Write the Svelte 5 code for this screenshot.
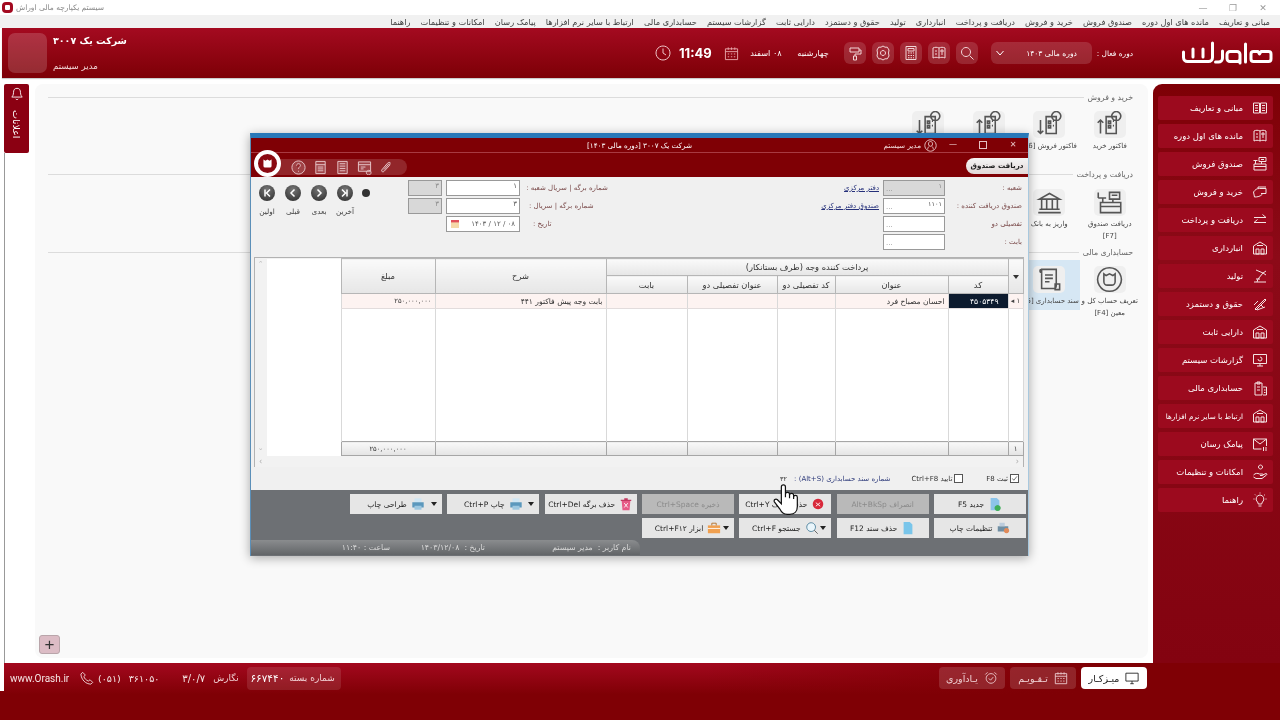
<script>
  const P = {
    book: "M1.5 3h6v10h-6zM8.5 3h6v10h-6zM3 5.5h3M3 8h3M3 10.5h3M10 5.5h3M10 8h3M10 10.5h3",
    book2: "M2 3c2-1 4-1 6 0c2-1 4-1 6 0v10c-2-1-4-1-6 0c-2-1-4-1-6 0zM8 3v10M4 6h2M4 9h2M10 5h2v2h-2zM10 9h2",
    register: "M7 1.5h7v4h-7zM2 8h12v6H2zM3.5 8V4.5M2 10.5h12M1.5 4.5h4M9.5 8V5.5M9 3.5h3",
    hand: "M1.5 8c2-2.5 3-3.5 6-3.5h6.5v5h-5M1.5 8l1 5c3 0 6-.5 8-3M6 4.5V3h8",
    arrows: "M2 5.5h12M10.5 2.5l3.5 3M14 10.5H2M5.5 7.5l-3.5 3",
    store: "M1.5 14V6l6.5-4 6.5 4v8zM4 9h3v5H4zM9 9h3v5H9zM5 5.5h6",
    robot: "M2 14h12M5 14l1-3 5-6M4 2l7 3 3-2M11 5l3 2M4 11h4",
    pen: "M3 13l3-3 7-7 1 1-7 7-3 3zM9 9l3 3M2 9l4-4M5 14l8-3",
    monitor: "M1.5 2.5h13v9h-13zM5 14h6M8 11.5V14M6 7a2 2 0 1 0 2-2",
    clip: "M3 3h7v12H3zM5 2h3v2H5zM5 7h3M5 10h3M11 7h3.5v8H11M12 10h1.5M12 12.5h1.5",
    mail: "M1.5 3h13v7M1.5 3v10h8M1.5 3l6.5 5 6.5-5M11.5 11v4M14 11v4",
    care: "M8.5 1a2 2 0 1 0 .01 0M1.5 11c2-2 4-2 6-1h3c1 0 1 1.5 0 1.5H8M10.5 11l3.5-1.5c1 0 1 1 .5 1.5L10 14.5H4L1.5 13",
    bulb: "M8 3a4 4 0 0 0-2.5 7c.7.7.7 1.5.7 2h3.6c0-.5 0-1.3.7-2A4 4 0 0 0 8 3zM6.5 14h3M8 .5v1M1.5 7h1M13.5 7h1M3 2.5l.8.8M13 2.5l-.8.8",
    roller: "M3 3h9v4H3zM12 5h2v4H8v2M6.5 11h3v4h-3z",
    gear: "M8 1l2 1.200h2.300L14 5l-.5 3 .5 3-1.700 2.800H10L8 15l-2-1.200H3.700L2 11l.5-3L2 5l1.700-2.800H6zM8 5.500a2.500 2.500 0 1 0 .01 0",
    calc: "M3 1.500h10v13H3zM5 3.500h6V6H5zM5 8h1.500M7.500 8H9M10 8h1M5 10.500h1.500M7.500 10.500H9M10 10.500h1M5 12.800h1.500M7.500 12.800H9M10 12.800h1",
    search: "M7 2.500a4.500 4.500 0 1 0 .01 0M10.500 10.500l4 4",
    clock: "M8 1a7 7 0 1 0 .01 0M8 3.500V8l3 2",
    cal: "M1.500 3h13v11.500h-13zM1.500 6h13M4.500 1.500V4M8 1.500V4M11.500 1.500V4M4 8.500h1.500M7.300 8.500h1.500M10.500 8.500H12M4 11.500h1.500M7.300 11.500h1.500M10.500 11.500H12",
    phone: "M3 1.500l3 3-1.500 2c.5 2 2.500 4 5 5l2-1.500 3 3-2 2c-6 0-11-5-11.500-11.500z",
    pc: "M1 2.500h14v9H1zM6 14.500h4M8 11.500v3",
    alarm: "M8 3a5.500 5.500 0 1 0 .01 0M5.500 8.500l2 2 3-3.500M1.500 4L4 1.500M14.500 4L12 1.500",
    user: "M8 1a7 7 0 1 0 .01 0M8 3a2.500 3 0 1 0 .01 0M4.500 13c0-2 1-3.500 2-4M11.500 13c0-2-1-3.500-2-4",
    help: "M8 1a7 7 0 1 0 .01 0M6 6c0-3 4.500-2.500 4 0c-.3 1.500-2 1.500-2 3.500M8 11.500v1",
    form: "M3 1.500h10v13H3zM3 5h10M5 7.500h6M5 9.500h6M5 11.500h6",
    list: "M3 1.500h10v13H3zM5 4h6M5 6.500h6M5 9h6M5 11.500h6",
    win: "M1.500 2h13v10h-13zM1.500 5h13M4 7.500h5M4 9.500h3M12.500 11a2.500 2.500 0 1 0 .01 0",
    att: "M12.500 3.500c-1-1.500-2.500-1-3.500 0l-6 7c-1 1.500 1 3 2.500 1.500l6-6.500c.5-1-.5-1.500-1.200-1L5.500 10"
  };
  const T = {
    up: "M9 5h9v15H9zM11 9h2v2h-2zM15 9h1M11 13h2v2h-2zM15 13h1M4 20V8M1.500 10.500L4 8l2.500 2.500M18 .5a4 4 0 1 0 .01 0",
    down: "M9 5h9v15H9zM11 9h2v2h-2zM15 9h1M11 13h2v2h-2zM15 13h1M4 8v12M1.500 17.500L4 20l2.500-2.500M18 .5a4 4 0 1 0 .01 0",
    reg: "M12 3h9v6h-9zM4 12h18v9H4zM6 12V8M4 15.500h18M2 8h7M15 12V9M14 5.500h5M2 3v5",
    bank: "M3 9l9-5 9 5zM5 9v9M9.500 9v9M14.500 9v9M19 9v9M3 18h18M2 21h20",
    seal: "M12 1.500a10.500 10.500 0 1 0 .01 0M7 7l2 1.500 3-1.500 3 1.500L17 7v7a3 3 0 0 1-3 3h-4a3 3 0 0 1-3-3z",
    ledger: "M5 3h13v14c0 2-1 3-2 3H5zM5 3c-2 0-2 3 0 3M8 8h7M8 11h7M8 14h4M17 16h4v5h-4z"
  };
  const menu = ["مبانی و تعاریف","مانده های اول دوره","صندوق فروش","خرید و فروش","دریافت و پرداخت","انبارداری","تولید","حقوق و دستمزد","دارایی ثابت","گزارشات سیستم","حسابداری مالی","ارتباط با سایر نرم افزارها","پیامک رسان","امکانات و تنظیمات","راهنما"];
  const side = ["book","book2","register","hand","arrows","store","robot","pen","store","monitor","clip","store","mail","care","bulb"];
  const sections = [
    { h: "خرید و فروش", items: [
      { i: "up", l: ["فاکتور خرید"] }, { i: "down", l: ["فاکتور فروش [F6]"] }, { i: "up", l: [] }, { i: "down", l: [] } ] },
    { h: "دریافت و پرداخت", items: [
      { i: "reg", l: ["دریافت صندوق", "[F7]"] }, { i: "bank", l: ["واریز به بانک"] } ] },
    { h: "حسابداری مالی", items: [
      { i: "seal", l: ["تعریف حساب کل و", "معین [F4]"] }, { i: "ledger", l: ["سند حسابداری [F5]"], on: true } ] }
  ];
  const heads = ["بابت","عنوان تفصیلی دو","کد تفصیلی دو","عنوان","کد"];
  const nav = [
    { t: "اولین", d: "M6 4.500v7M11 4.500L7.500 8l3.500 3.500" },
    { t: "قبلی", d: "M9.500 4.500L6 8l3.500 3.500" },
    { t: "بعدی", d: "M6.500 4.500L10 8l-3.500 3.500" },
    { t: "آخرین", d: "M10 4.500v7M5 4.500L8.500 8 5 11.500" }
  ];
  const tools = ["help","form","list","win","att"];
  const btns = [
    { t: "جدید F5", i: "new" },
    { t: "انصراف Alt+BkSp", off: true },
    { t: "حذف ردیف Ctrl+Y", i: "x" },
    { t: "ذخیره Ctrl+Space", off: true },
    { t: "حذف برگه Ctrl+Del", i: "trash" },
    { t: "چاپ Ctrl+P", i: "print", caret: true },
    { t: "طراحی چاپ", i: "print", caret: true },
    { t: "تنظیمات چاپ", i: "setup" },
    { t: "حذف سند F12", i: "doc" },
    { t: "جستجو Ctrl+F", i: "find", caret: true },
    { t: "ابزار Ctrl+F۱۲", i: "box", caret: true }
  ];
  const B = {
    new: [["M3 1h7l3 3v11H3z","#8cc4ea"],["M11 9a3.500 3.500 0 1 0 .01 0","#3fae5a"]],
    x: [["M8 2a6 6 0 1 0 .01 0","#d8283a"],["M5.500 6.500l5 4M10.500 6.500l-5 4","none","#fff"]],
    trash: [["M3 4h10l-1 11H4z","#e65a86"],["M2 3h12v1.500H2zM6 1.500h4V3H6z","#c23a62"],["M6 7l4 5M10 7l-4 5","none","#fff"]],
    print: [["M4 1.500h8V6H4z","#cfe6f4"],["M1.500 6h13v6h-13z","#5b98bd"],["M4 10h8v4.500H4z","#9cc7e0"]],
    setup: [["M2 6h12v6H2z","#6f8ea3"],["M4 2h6v4H4z","#bcd"],["M12 8a3 3 0 1 0 .01 0","#e08a5a"]],
    doc: [["M3 1h7l3 3v11H3z","#79c5ea"]],
    find: [["M7 2a5 5 0 1 0 .01 0","#e9f5fb","#4a7f9a"],["M10.500 10.500l4 4","none","#555"]],
    box: [["M1 5h14v9H1z","#f0a050"],["M5.500 5V2.500h5V5","none","#b26a20"],["M1 8.500h14","none","#fff"]]
  };
</script>

{#snippet ico(d, cls = "ic")}
  <svg class={cls} viewBox="0 0 16 16" aria-hidden="true"><path {d} /></svg>
{/snippet}

<div class="app">
  <div class="titlebar">
    <span class="appicon"></span>
    <span class="apptitle" dir="rtl">سیستم یکپارچه مالی اوراش</span>
    <span class="winbtns"><i>—</i><i>❐</i><i>✕</i></span>
  </div>
  <nav class="menubar" dir="rtl">
    {#each menu as m}<span>{m}</span>{/each}
  </nav>
  <header class="topbar">
    <div class="avatar"></div>
    <div class="company" dir="rtl">
      <b>شرکت یک ۳۰۰۷</b>
      <span>مدیر سیستم</span>
    </div>
    <div class="center">
      {@render ico(P.clock, "ic clockic")}
      <b class="time">11:49</b>
      {@render ico(P.cal, "ic calic")}
      <span class="date" dir="rtl">۰۸ اسفند</span>
      <span class="day" dir="rtl">چهارشنبه</span>
      <div class="hbtns">
        {#each ["roller","gear","calc","book2","search"] as n}
          <span class="hbtn">{@render ico(P[n])}</span>
        {/each}
      </div>
      <div class="period">
        <svg class="chev" viewBox="0 0 10 10"><path d="M1.500 3l3.500 4 3.500-4" /></svg>
        <span dir="rtl">دوره مالی ۱۴۰۳</span>
      </div>
      <span class="plabel" dir="rtl">دوره فعال :</span>
    </div>
    <svg class="logo" viewBox="0 0 100 36" aria-label="اوراش">
      <path d="M78.500 12.500h4.500l1.500 2.500 1.500-2.500h7.500a2.500 2.500 0 0 1 2.500 2.500v5a2.500 2.500 0 0 1-2.500 2.500H78.500a2.500 2.500 0 0 1-2.500-2.500v-5a2.500 2.500 0 0 1 2.500-2.500z" />
      <path d="M70.500 5V23" />
      <path d="M55 12.500h7a3 3 0 0 1 3 3v4a3 3 0 0 1-3 3h-7a3 3 0 0 1-3-3v-4a3 3 0 0 1 3-3zM65 18v6" />
      <path d="M47.500 12v7a4 4 0 0 1-4 4h-3" />
      <path d="M8.500 13v5.500a4 4 0 0 0 4 4h21a4 4 0 0 0 4-4V4M18 10v8M28 10v8" />
    </svg>
  </header>

  <div class="body">
    <aside class="rail">
      <div class="notice">
        <svg class="bell" viewBox="0 0 16 16"><path d="M8 1.500c-3 0-4 2-4 5 0 2.500-1 4-2 5h12c-1-1-2-2.500-2-5 0-3-1-5-4-5zM6.500 13.500c.5 1.200 2.500 1.200 3 0" /></svg>
        <span class="noticetext" dir="rtl">اعلانات</span>
      </div>
      <div class="railline"></div>
    </aside>

    <main class="panel">
      {#each sections as s}
        <section class="sec">
          <div class="sechead" dir="rtl"><span>{s.h}</span><i></i></div>
          <div class="items" dir="rtl">
            {#each s.items as it}
              <div class={it.on ? "item on" : "item"}>
                <span class="tile"><svg class="tileic" viewBox="0 0 24 24"><path d={T[it.i]} /></svg></span>
                {#each it.l as line}<span class="itemlabel">{line}</span>{/each}
              </div>
            {/each}
          </div>
        </section>
      {/each}
      <button class="plus" aria-label="افزودن">+</button>
    </main>

    <aside class="sidebar" dir="rtl">
      {#each menu as m, i}
        <div class={m.length > 20 ? "sideitem long" : "sideitem"}>{@render ico(P[side[i]], "ic sideic")}<span>{m}</span></div>
      {/each}
    </aside>
  </div>

  <footer class="footer">
    <span class="web">www.Orash.ir</span>
    {@render ico(P.phone, "ic phone")}
    <span class="tel" dir="ltr">(۰۵۱)</span>
    <span class="tel num">۳۶۱۰۵۰</span>
    <span class="tel ver">۳/۰/۷</span>
    <span class="small">نگارش</span>
    <span class="chip" dir="rtl"><span class="small">شماره بسته</span><b>۶۶۷۴۴۰</b></span>
    <div class="tabs" dir="rtl">
      <span class="tab active">{@render ico(P.pc, "ic tabic")}میـزکـار</span>
      <span class="tab">{@render ico(P.cal, "ic tabic")}تـقـویـم</span>
      <span class="tab">{@render ico(P.alarm, "ic tabic")}یـادآوری</span>
    </div>
  </footer>

  <div class="modal">
    <div class="mtitle">
      <span class="mtext" dir="rtl">شرکت یک ۳۰۰۷ [دوره مالی ۱۴۰۳]</span>
      <span class="muser" dir="rtl">{@render ico(P.user, "ic usric")}مدیر سیستم</span>
      <span class="mbtns"><i>—</i><i class="sq"></i><i>✕</i></span>
    </div>
    <div class="mtools">
      <div class="mlogo"><svg viewBox="0 0 16 16"><path d="M3 3l2.500 1.500L8 3l2.500 1.500L13 3v8a2 2 0 0 1-2 2H5a2 2 0 0 1-2-2z" /></svg></div>
      <div class="toolpill">
        {#each tools as t}{@render ico(P[t], "ic toolic")}{/each}
      </div>
      <span class="mtab" dir="rtl">دریافت صندوق</span>
    </div>

    <div class="form">
      <div class="navs">
        {#each nav as n}
          <div class="navcol">
            <span class="round"><svg viewBox="0 0 16 16"><path d={n.d} /></svg></span>
            <span class="navlabel" dir="rtl">{n.t}</span>
          </div>
        {/each}
        <span class="dot"></span>
      </div>
      <div class="midform" dir="rtl">
        <span class="lb">شماره برگه | سریال شعبه :</span><span class="inp">۱</span><span class="inp grey">۳</span>
        <span class="lb">شماره برگه | سریال :</span><span class="inp big">۳</span><span class="inp grey">۳</span>
        <span class="lb dl">تاریخ :</span>
        <span class="inp datei">
          <svg class="datecal" viewBox="0 0 10 10"><rect width="10" height="10" fill="#f5d9a8" /><rect width="10" height="3" fill="#e0505a" /></svg>
          <span dir="ltr">۱۴۰۳ / ۱۲ / ۰۸</span>
        </span><span></span>
      </div>
      <div class="rightform" dir="rtl">
        <span class="lb">شعبه :</span><span class="inp grey dots"><em>۱</em><small>...</small></span><a href="#a">دفتر مرکزی</a>
        <span class="lb">صندوق دریافت کننده :</span><span class="inp dots"><em>۱۱۰۱</em><small>...</small></span><a href="#a">صندوق دفتر مرکزی</a>
        <span class="lb">تفصیلی دو</span><span class="inp dots"><em></em><small>...</small></span><span></span>
        <span class="lb">بابت :</span><span class="inp dots"><em></em><small>...</small></span><span></span>
      </div>
    </div>

    <div class="tablebox">
      <table>
        <colgroup>
          <col class="c0" /><col class="c1" /><col class="c2" /><col class="c3" /><col class="c4" />
          <col class="c5" /><col class="c6" /><col class="c7" /><col class="c8" /><col class="c9" />
        </colgroup>
        <tbody>
          <tr class="r1">
            <td class="vs" rowspan="5"><span>⌃</span><span>⌄</span></td>
            <td class="blank" rowspan="5"></td>
            <th rowspan="2">مبلغ</th>
            <th rowspan="2">شرح</th>
            <th colspan="5">پرداخت کننده وجه (طرف بستانکار)</th>
            <th rowspan="2"><span class="drop"></span></th>
          </tr>
          <tr class="r2">{#each heads as h}<th>{h}</th>{/each}</tr>
          <tr class="r3">
            <td class="amt">۲۵۰,۰۰۰,۰۰۰</td>
            <td dir="rtl">بابت وجه پیش فاکتور ۴۴۱</td>
            <td></td><td></td><td></td>
            <td dir="rtl">احسان مصباح فرد</td>
            <td class="sel">۴۵۰۵۳۴۹</td>
            <td class="ind">◂ ۱</td>
          </tr>
          <tr class="r4"><td></td><td></td><td></td><td></td><td></td><td></td><td></td><td></td></tr>
          <tr class="r5">
            <td class="amt">۲۵۰,۰۰۰,۰۰۰</td><td></td><td></td><td></td><td></td><td></td><td></td><td class="ind">۱</td>
          </tr>
          <tr class="r6"><td colspan="10" class="hs"><div class="hsin"><span>‹</span><span>›</span></div></td></tr>
        </tbody>
      </table>
    </div>

    <div class="checks" dir="rtl">
      <span class="cb"><svg viewBox="0 0 10 10"><path d="M2 5l2 2.500L8.500 2" /></svg></span><span class="cbt">ثبت F8</span>
      <span class="cb two"></span><span class="cbt">تایید Ctrl+F8</span>
      <span class="docno">شماره سند حسابداری (Alt+S) :</span>
      <span class="docval">۳۲</span>
    </div>

    <div class="actions">
      <div class="btngrid" dir="rtl">
        {#each btns as b}
          <div class={b.off ? "btn off" : "btn"}>
            {#if b.caret}<span class="caret"></span>{/if}
            {#if b.i}
              <svg class="bic" viewBox="0 0 16 16">
                {#each B[b.i] as s}<path d={s[0]} fill={s[1]} stroke={s[2] || "none"} />{/each}
              </svg>
            {/if}
            <span>{b.t}</span>
          </div>
        {/each}
      </div>
      <div class="status" dir="rtl">
        <span class="s1">نام کاربر : &nbsp;مدیر سیستم</span>
        <span class="s2">تاریخ : &nbsp;۱۴۰۳/۱۲/۰۸</span>
        <span>ساعت : ۱۱:۴۰</span>
      </div>
    </div>
  </div>

  <svg class="cursor" viewBox="0 0 28 34" aria-hidden="true">
    <path d="M9 3a2.200 2.200 0 0 1 4.400 0V14v-3a2.200 2.200 0 0 1 4.400 0v4-3a2.200 2.200 0 0 1 4.400 0v4-2a2 2 0 0 1 4 0V24c0 5-3 8.500-8 8.500h-3c-4 0-6-2-8-6L1.500 19a2 2 0 0 1 3-2.500L9 21z" />
  </svg>
</div>

<style>
  :global(body) { margin: 0; background: #fff; }
  .app {
    position: relative; width: 1280px; height: 720px; overflow: hidden;
    display: grid; grid-template-rows: 15px 13px 50px 585px 57px;
    font-family: "DejaVu Sans", "Noto Sans", sans-serif; font-size: 8px; color: #333;
    background: #fff; filter: blur(0.4px);
  }
  .ic { display: block; width: 16px; height: 16px; fill: none; stroke: currentColor; stroke-width: 1; flex: none; }
  i { font-style: normal; }

  .titlebar { display: flex; align-items: center; padding: 0 2px 0 2px; background: #fff; }
  .appicon { width: 9px; height: 9px; border: 2px solid #a30a20; border-radius: 3px; box-sizing: border-box; background: #fff; box-shadow: 0 0 0 1px #a30a20; margin: 0 1px; }
  .apptitle { margin-left: 3px; font-size: 7.5px; color: #888; }
  .winbtns { margin-left: auto; display: flex; font-size: 9px; color: #999; }
  .winbtns i { width: 30px; text-align: center; }

  .menubar { display: flex; justify-content: space-between; align-items: center; padding: 0 10px 0 390px; background: #f1f1f1; font-size: 8.2px; color: #3c3c3c; white-space: nowrap; }

  .topbar { display: flex; align-items: center; margin-left: 2px; padding: 0 5px 0 6px; background: linear-gradient(#a40a20, #7d0006); color: #fff; box-shadow: 0 1px 1px #0003; z-index: 1; }
  .avatar { width: 39px; height: 40px; border-radius: 7px; background: #ffffff2b; flex: none; }
  .company { display: flex; flex-direction: column; justify-content: space-between; align-items: flex-end; height: 36px; margin-left: 6px; white-space: nowrap; }
  .company b { font-size: 9.500px; }
  .company span { font-size: 8.6px; color: #f5dcdc; }
  .center { margin-left: auto; display: flex; align-items: center; white-space: nowrap; }
  .clockic { color: #efc5c8; }
  .time { font: 700 13px Inter, sans-serif; width: 33px; margin: 0 12px 0 8px; }
  .calic { color: #e7a5aa; width: 15px; height: 15px; }
  .date { width: 34px; margin: 0 13px 0 10px; font-size: 8.2px; text-align: center; }
  .day { width: 34px; font-size: 8.2px; text-align: center; }
  .hbtns { display: flex; gap: 6px; margin: 0 13px 0 14px; }
  .hbtn { display: grid; place-items: center; width: 22px; height: 22px; border-radius: 6px; background: #ffffff24; color: #f2d5d7; }
  .period { display: flex; align-items: center; width: 101px; height: 22px; box-sizing: border-box; padding: 0 15px 0 4px; border-radius: 6px; background: #ffffff24; justify-content: space-between; font-size: 7.6px; }
  .chev { width: 10px; height: 10px; fill: none; stroke: #fff; stroke-width: 1; }
  .plabel { margin: 0 0 0 4px; width: 37px; font-size: 7.4px; }
  .logo { width: 100px; height: 36px; margin-left: 42px; flex: none; fill: none; stroke: #fff; stroke-width: 3; stroke-linecap: round; stroke-linejoin: round; margin-top: 8px; }

  .body { display: flex; min-height: 0; }
  .rail { width: 35px; flex: none; padding: 6px 0 0 4px; box-sizing: border-box; display: flex; flex-direction: column; }
  .notice { width: 25px; height: 69px; background: #8b0012; border-radius: 2px; color: #fff; display: flex; flex-direction: column; align-items: center; flex: none; }
  .bell { width: 14px; height: 14px; margin-top: 3px; fill: none; stroke: #fff; stroke-width: 1; }
  .noticetext { writing-mode: vertical-rl; margin-top: 9px; font-size: 9.5px; }
  .railline { flex: 1; width: 1px; background: #999; }

  .panel { position: relative; flex: 1; margin: 6px 5px 5px 0; padding: 8px 8px 0 13px; background: #f9f9f9; border-radius: 8px; min-width: 0; }
  .sec { height: 77.500px; }
  .sechead { display: flex; align-items: center; gap: 4px; height: 10px; padding-right: 7px; color: #666; font-size: 7.8px; white-space: nowrap; }
  .sechead i { flex: 1; height: 1px; background: #dcdcdc; }
  .items { display: flex; margin-top: 5px; }
  .item { width: 60.500px; height: 48px; display: flex; flex-direction: column; align-items: center; padding-top: 4px; box-sizing: border-box; white-space: nowrap; flex: none; }
  .item.on { background: #d6e7f4; margin-top: -2px; padding-top: 6px; height: 50px; }
  .tile { display: grid; place-items: center; width: 32px; height: 27px; border-radius: 5px; background: #efefef; margin-bottom: 2px; }
  .tileic { width: 27px; height: 27px; fill: none; stroke: #555; stroke-width: 1.400; }
  .itemlabel { font-size: 7px; line-height: 12px; color: #444; }
  .plus { position: absolute; left: 4px; bottom: 4px; width: 21px; height: 19px; padding: 0; border: 1px solid #b9a5aa; border-radius: 3px; background: #dcbcc5; font: 400 17px/15px "Liberation Sans", sans-serif; color: #333; }

  .sidebar { width: 127px; flex: none; margin-top: 6px; padding: 12px 7px 0 5px; box-sizing: border-box; background: linear-gradient(#7e0006, #8c0a18 30%, #830310); border-radius: 9px 0 0 0; display: flex; flex-direction: column; gap: 4px; color: #fff; }
  .sideitem { display: flex; align-items: center; gap: 9px; height: 24px; padding-right: 5px; background: #9c0a1e; border-radius: 2px; flex: none; font-size: 8.500px; white-space: nowrap; overflow: hidden; }
  .sideitem.long { font-size: 7.200px; }
  .sideic { color: #f4e3e3; }

  .footer { position: relative; display: flex; align-items: center; height: 57px; padding: 0 133px 27px 10px; box-sizing: border-box; color: #f6e4e4; background: linear-gradient(to right, #7f000500 55%, #7f0005 85%), linear-gradient(#a3081e, #7f0005 55%); }
  .footer::before { content: ""; position: absolute; left: 0; top: 0; width: 4px; height: 28px; background: #fff; }
  .web { font: 400 10px Roboto, sans-serif; width: 60px; white-space: nowrap; }
  .phone { width: 14px; height: 14px; margin-left: 10px; }
  .tel { font-size: 9.500px; margin-left: 4px; white-space: nowrap; }
  .tel.num { margin-left: 8px; }
  .tel.ver { margin-left: 23px; font-size: 10px; }
  .small { font-size: 9px; color: #f0cfd2; margin-left: 8px; white-space: nowrap; }
  .chip { display: flex; flex-direction: row; align-items: center; justify-content: space-between; gap: 5px; width: 94px; height: 23px; box-sizing: border-box; padding: 0 6px; margin-left: 8px; background: #ffffff1c; border-radius: 4px; }
  .chip .small { margin: 0; }
  .chip b { font-size: 10.500px; font-weight: 400; color: #fff; }
  .tabs { margin-left: auto; display: flex; gap: 5px; }
  .tab { display: flex; align-items: center; justify-content: center; gap: 6px; width: 66px; height: 22px; border-radius: 4px; background: #ffffff24; color: #efcfd2; font-size: 9.500px; white-space: nowrap; }
  .tab.active { background: #fff; color: #222; }
  .tabic { width: 14px; height: 14px; }

  .modal { position: absolute; left: 250px; top: 133px; width: 779px; height: 423px; box-sizing: border-box; border-left: 1px solid #5b8fb8; border-right: 1px solid #a8c8de; border-top: 5px solid #2878b8; background: #f0f0f0; box-shadow: 0 2px 10px #0005; z-index: 2; display: flex; flex-direction: column; }
  .mtitle { position: relative; display: flex; justify-content: center; align-items: center; height: 15px; flex: none; background: #7f0005; color: #fff; border-bottom: 1px solid #a83a42; box-sizing: border-box; }
  .mtext { font-size: 7.200px; }
  .muser { position: absolute; right: 91px; top: 1px; display: flex; align-items: center; gap: 3px; font-size: 7.200px; white-space: nowrap; color: #f3dcdc; }
  .usric { width: 13px; height: 13px; }
  .mbtns { position: absolute; right: 0; top: 0; display: flex; font-size: 8px; line-height: 14px; color: #e6c0c2; }
  .mbtns i { width: 30px; text-align: center; }
  .mbtns .sq { position: relative; }
  .mbtns .sq::after { content: ""; position: absolute; left: 11px; top: 3px; width: 6px; height: 6px; border: 1px solid #e6c0c2; }
  .mtools { position: relative; display: flex; align-items: flex-end; height: 24px; flex: none; background: #7f0005; }
  .mlogo { position: absolute; left: 3px; top: -3px; width: 27px; height: 27px; box-sizing: border-box; border: 4px solid #fff; border-radius: 50%; background: #8a0a12; display: grid; place-items: center; z-index: 1; }
  .mlogo svg { width: 13px; height: 13px; fill: #fff; }
  .toolpill { display: flex; align-items: center; gap: 7px; width: 139px; height: 16px; margin: 0 0 2px 17px; padding-left: 23px; box-sizing: border-box; border-radius: 0 9px 9px 0; background: #ffffff26; color: #e9c9cc; }
  .toolic { width: 15px; height: 15px; fill: #ffffff22; }
  .mtab { margin: 0 0 3px auto; width: 62px; height: 16px; line-height: 16px; text-align: center; background: linear-gradient(#f5f5f5, #e2d8d8); border-radius: 9px 0 0 9px; color: #222; font-size: 7.200px; font-weight: 700; white-space: nowrap; }

  .form { display: flex; height: 80px; flex: none; padding: 3px 5px 0 3px; box-sizing: border-box; }
  .navs { display: flex; align-items: flex-start; padding-top: 5px; }
  .navcol { width: 26px; display: flex; flex-direction: column; align-items: center; }
  .round { width: 16px; height: 16px; border-radius: 50%; background: radial-gradient(circle at 50% 30%, #777, #2a2a2a); }
  .round svg { display: block; fill: none; stroke: #fff; stroke-width: 1.500; }
  .navlabel { margin-top: 6px; font-size: 7.300px; color: #444; white-space: nowrap; }
  .dot { width: 8px; height: 8px; border-radius: 50%; background: #333; margin: 4px 0 0 4px; }
  .lb { color: #7a4a4a; font-size: 7px; white-space: nowrap; }
  .midform { display: grid; grid-template-columns: 88px 74px 38px; grid-auto-rows: 16px; row-gap: 2px; align-items: center; margin-left: 38px; width: 200px; }
  .midform .inp.grey { margin-right: 4px; }
  .midform .lb { text-align: left; padding-left: 9px; }
  .midform .dl { padding-left: 13px; }
  .inp { display: block; height: 16px; box-sizing: border-box; border: 1px solid #999; background: #fff; text-align: right; padding: 0 2px; font-size: 7px; line-height: 10px; color: #555; }
  .inp.grey { background: #d8d8d8; color: #888; }
  .datei { display: flex; align-items: center; justify-content: space-between; padding: 0 4px; line-height: 14px; color: #555; }
  .datecal { width: 8px; height: 8px; order: 2; }
  .rightform { margin-left: auto; display: grid; grid-template-columns: 77px 62px 58px; grid-auto-rows: 16px; row-gap: 2px; align-items: center; width: 201px; padding-right: 1px; }
  .dots { display: flex; justify-content: space-between; }
  .dots em { font-style: normal; font-size: 6.500px; }
  .dots small { font-size: 7px; line-height: 16px; color: #888; }
  .rightform a { color: #25307a; font-size: 7px; padding-right: 4px; white-space: nowrap; }

  .tablebox { margin: 0 4px 0 3px; height: 210px; flex: none; border: 1px solid #b2b2b2; background: #f2f2f2; box-sizing: border-box; }
  table { table-layout: fixed; width: 768px; border-collapse: collapse; }
  .c0 { width: 12px; } .c1 { width: 74px; } .c2 { width: 94px; } .c3 { width: 171px; } .c4 { width: 81px; }
  .c5 { width: 90px; } .c6 { width: 58px; } .c7 { width: 113px; } .c8 { width: 60px; } .c9 { width: 15px; }
  th { font-weight: 400; font-size: 8.300px; color: #333; background: linear-gradient(#fafafa, #e6e6e6); border: 1px solid #b6b6b6; padding: 0; white-space: nowrap; overflow: hidden; }
  td { padding: 0 3px; border-left: 1px solid #d9d9d9; border-right: 1px solid #d9d9d9; background: #fff; font-size: 7.600px; white-space: nowrap; overflow: hidden; }
  .r1 { height: 17px; } .r2 { height: 18px; } .r3 { height: 15px; } .r4 { height: 133px; } .r5 { height: 14px; } .r6 { height: 11px; }
  .vs { background: #f2f2f2; border: 0; color: #bbb; font-size: 7px; line-height: 8px; padding: 0; text-align: center; vertical-align: top; }
  .vs span { display: block; padding-top: 1px; }
  .vs span + span { padding-top: 176px; }
  .blank { background: #fff; border: 0; border-left: 1px solid #fff; }
  .drop { display: inline-block; border: 3px solid transparent; border-top: 4px solid #333; border-bottom: 0; }
  .r3 td { background: #fdf3f1; border-bottom: 1px solid #e2dcdc; text-align: right; }
  .r3 .amt, .r5 .amt { font-size: 6.800px; }
  .r3 .sel { background: #0d1b2e; color: #fff; text-align: right; padding-right: 9px; }
  .r3 .ind, .r5 .ind { text-align: center; padding: 0; color: #444; font-size: 7px; }
  .r5 td { background: linear-gradient(#f8f8f8, #e4e4e4); border: 1px solid #a6a6a6; text-align: center; }
  .hs { background: #f2f2f2; border: 0; padding: 0 4px; color: #aaa; font-size: 8px; line-height: 9px; }
  .hsin { display: flex; justify-content: space-between; }

  .checks { display: flex; align-items: center; height: 23px; flex: none; padding-right: 9px; }
  .cb { display: block; width: 9px; height: 9px; border: 1px solid #555; background: #fff; box-sizing: border-box; margin-left: 2px; flex: none; }
  .cb svg { display: block; fill: none; stroke: #333; }
  .cb.two { margin-right: 23px; }
  .cbt { font-size: 7px; color: #333; white-space: nowrap; }
  .docno { margin-right: 21px; font-size: 7px; color: #2d3a7a; white-space: nowrap; }
  .docval { margin-right: 7px; font-size: 6.500px; color: #333; }

  .actions { flex: 1; background: #6d7074; display: flex; flex-direction: column; padding-top: 4px; min-height: 0; }
  .btngrid { display: grid; grid-template-columns: repeat(7, 92px); column-gap: 5.330px; row-gap: 4px; grid-auto-rows: 20px; justify-content: start; padding-right: 2px; }
  .btn { display: flex; align-items: center; justify-content: center; gap: 4px; background: #e6e6e6; font-size: 7.500px; color: #222; white-space: nowrap; overflow: hidden; position: relative; }
  .btn.off { background: #b9b9b9; color: #8a8a8a; }
  .bic { width: 14px; height: 14px; flex: none; }
  .caret { position: absolute; right: 5px; top: 8px; border: 3px solid transparent; border-top: 4px solid #222; border-bottom: 0; }
  .status { margin-top: 2px; width: 389px; height: 15px; display: flex; align-items: center; padding: 0 9px 0 0; box-sizing: border-box; background: linear-gradient(#8a8c8e, #626568); border-radius: 0 8px 0 0; color: #d8d8d8; font-size: 7.800px; white-space: nowrap; }
  .s1 { width: 146px; }
  .s2 { width: 95px; }

  .cursor { position: absolute; left: 773px; top: 483px; width: 26px; height: 34px; fill: #fff; stroke: #111; stroke-width: 1.300; z-index: 3; }
</style>
